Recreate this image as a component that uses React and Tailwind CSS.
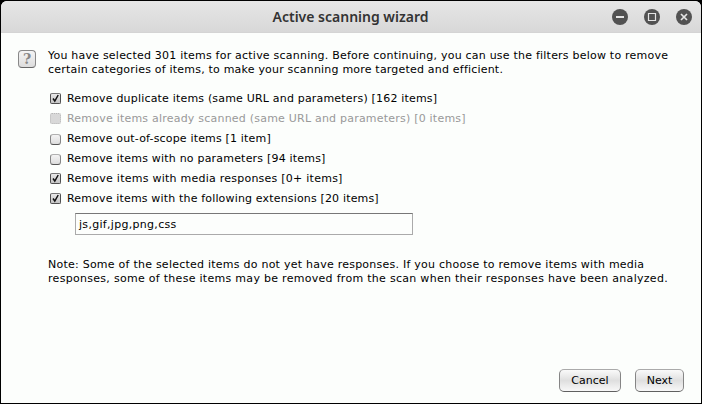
const options = [
  { label: 'Remove duplicate items (same URL and parameters) [162 items]', checked: true, spacing: 'tracking-[0.185px]' },
  { label: 'Remove items already scanned (same URL and parameters) [0 items]', disabled: true, spacing: 'tracking-[0.215px]' },
  { label: 'Remove out-of-scope items [1 item]', spacing: 'tracking-[0.17px]' },
  { label: 'Remove items with no parameters [94 items]', spacing: 'tracking-[0.2px]' },
  { label: 'Remove items with media responses [0+ items]', checked: true, spacing: 'tracking-[0.245px]' },
  { label: 'Remove items with the following extensions [20 items]', checked: true, spacing: 'tracking-[0.165px]' },
];

function WindowButton({ children }) {
  return (
    <svg className="size-4" viewBox="0 0 16 16" fill="none" stroke="#e4e4e4">
      <circle cx="8" cy="8" r="8" fill="#525252" stroke="none" />
      {children}
    </svg>
  );
}

function CheckBox({ checked, disabled }) {
  if (disabled) {
    return <span className="mb-px size-[11px] shrink-0 rounded-[2px] border border-dotted border-[#b8b8b8] bg-[#d8d8d8]" />;
  }
  return (
    <span
      className={
        checked
          ? 'mb-px size-[11px] shrink-0 rounded-[2px] border border-[#505050] border-t-[#777] bg-linear-to-b from-[#e8e8e8] to-[#c4c4c4]'
          : 'size-[11px] shrink-0 rounded-[3px] border border-[#858585] border-t-[#b0b0b0] border-b-[#555] bg-linear-to-b from-[#f4f4f4] to-[#dcdcdc]'
      }
    >
      {checked && (
        <svg className="block size-[9px]" viewBox="0 0 9 9" fill="none" stroke="#111" strokeWidth="1.5">
          <path d="M2 4.5 L3.8 7 L7.2 1" />
        </svg>
      )}
    </span>
  );
}

function Button({ children, className }) {
  return (
    <button
      className={`h-[23px] rounded-[5px] border border-[#858585] border-t-[#aaa] border-b-[#606060] bg-linear-to-b from-[#fafafa] via-[#dfdfdf] to-[#f8f8f8] pb-px leading-none ${className}`}
    >
      {children}
    </button>
  );
}

export default function App() {
  return (
    <div className="h-[404px] w-[702px] bg-black p-px font-['DejaVu_Sans',sans-serif] text-[11px] text-black">
      <div className="flex h-full flex-col overflow-hidden rounded-t-[6px] bg-[#fcfefc]">
        <header className="flex h-8 shrink-0 items-center border-b border-[#d4d4d4] bg-linear-to-b from-[#e6e6e6] to-[#d8d8d8] pr-[9px] pl-[88px]">
          <h1 className="flex-1 text-center font-['Noto_Sans',sans-serif] text-[14px] leading-8 font-semibold whitespace-nowrap text-[#333]">
            Active scanning wizard
          </h1>
          <div className="flex gap-4">
            <WindowButton><path d="M4 8h8" strokeWidth="2" /></WindowButton>
            <WindowButton><path d="M4.5 4.5h7v7h-7z" strokeWidth="1.2" /></WindowButton>
            <WindowButton><path d="M5 5l6 6M11 5l-6 6" strokeWidth="1.7" /></WindowButton>
          </div>
        </header>
        <main className="flex flex-1 flex-col pt-[16px] pl-[17px]">
          <div className="flex gap-[12px]">
            <div className="mt-px flex size-[18px] items-center justify-center rounded-[4px] border border-[#888] border-b-[#666] bg-linear-to-b from-[#f5f5f5] to-[#ddd] font-['DejaVu_Serif',serif] text-[14px] leading-none font-bold text-[#888]">
              ?
            </div>
            <div className="leading-[14px] whitespace-nowrap">
              <p className="tracking-[0.22px]">You have selected 301 items for active scanning. Before continuing, you can use the filters below to remove</p>
              <p className="tracking-[0.2px]">certain categories of items, to make your scanning more targeted and efficient.</p>
            </div>
          </div>
          <div className="mt-[12px] ml-[32px] flex flex-col">
            {options.map((o) => (
              <label key={o.label} className={`flex h-5 items-center gap-[6px] whitespace-nowrap ${o.spacing} ${o.disabled ? 'text-[#999]' : ''}`}>
                <CheckBox {...o} />
                <span>{o.label}</span>
              </label>
            ))}
          </div>
          <div className="mt-[4px] ml-[57px] flex h-[22px] w-[338px] items-center border border-[#aaa] border-t-[#777] bg-[#fcfefc] pt-[2px] pl-[3px] tracking-[0.3px]">
            js,gif,jpg,png,css
          </div>
          <div className="mt-[23px] ml-[30px] leading-[14px] whitespace-nowrap">
            <p className="tracking-[0.24px]">Note: Some of the selected items do not yet have responses. If you choose to remove items with media</p>
            <p className="tracking-[0.29px]">responses, some of these items may be removed from the scan when their responses have been analyzed.</p>
          </div>
          <footer className="mt-auto mr-[17px] mb-[11px] flex justify-end gap-[14px]">
            <Button className="w-[62px]">Cancel</Button>
            <Button className="w-[49px]">Next</Button>
          </footer>
        </main>
      </div>
    </div>
  );
}
